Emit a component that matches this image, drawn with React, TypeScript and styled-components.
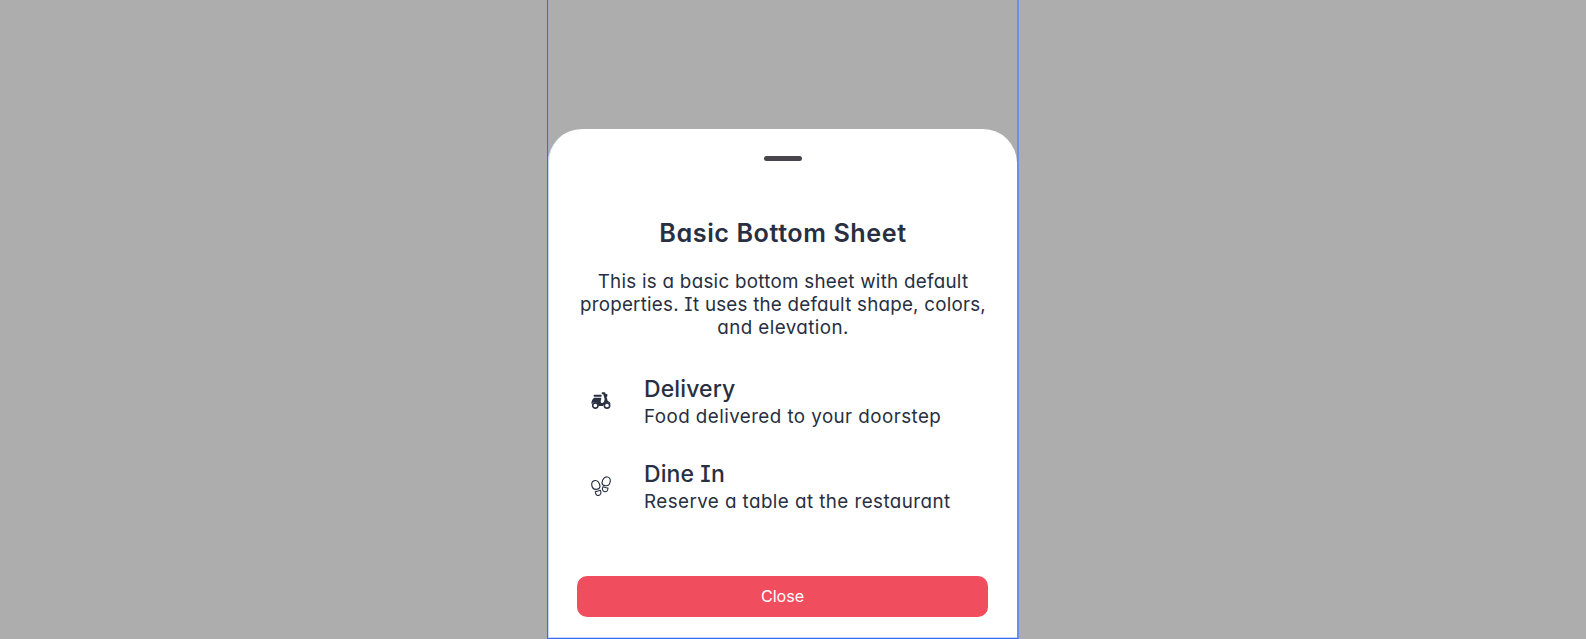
import React from "react";
import styled, { createGlobalStyle } from "styled-components";

const GlobalStyle = createGlobalStyle`
  * { box-sizing: border-box; }
  body {
    margin: 0;
    background: #adadad;
    font-family: Inter, "Open Sans", sans-serif;
    font-feature-settings: "cv11", "cv08";
    color: #282f41;
  }
`;

const Screen = styled.main`
  display: flex;
  justify-content: center;
  height: 639px;
  overflow: hidden;
  background: #adadad;
`;

const Device = styled.div`
  display: flex;
  align-items: flex-end;
  width: 472px;
  height: 639px;
  margin-right: 20px;
  border: solid #2f6ff0;
  border-width: 0 2px 1px 1px;
  border-right-color: #6791e1;
  box-shadow: inset 1px 0 0 #9fa9be;
`;

const Sheet = styled.section`
  display: flex;
  flex-direction: column;
  align-items: center;
  width: 100%;
  height: 509px;
  padding: 27px 28px 0;
  background: #fff;
  border-radius: 34px 34px 0 0;
  box-shadow: inset 1px -1px 0 #c6d7f9;
`;

const Handle = styled.div`
  flex: none;
  width: 38px;
  height: 5px;
  border-radius: 3px;
  background: #49454f;
`;

const Title = styled.h1`
  margin: 56px 0 0;
  padding-left: 1px;
  font-size: 25.2px;
  font-weight: 620;
  line-height: 32px;
  letter-spacing: 0.56px;
  white-space: nowrap;
`;

const Description = styled.p`
  display: flex;
  flex-direction: column;
  align-items: center;
  margin: 20.6px 0 0;
  padding-left: 1px;
  font-size: 18.8px;
  line-height: 23.2px;
  white-space: nowrap;
`;

const Line = styled.span<{ $spacing: number }>`
  letter-spacing: ${(p) => p.$spacing}px;
`;

const Options = styled.ul`
  display: flex;
  flex-direction: column;
  gap: 31px;
  align-self: stretch;
  margin: 35.2px 0 0;
  padding: 0;
  list-style: none;
`;

const Option = styled.li`
  display: grid;
  grid-template-columns: 68px 1fr;
  align-items: center;
  height: 54px;
`;

const Icon = styled.svg`
  width: 20px;
  height: 20px;
  margin: 0 0 0 15px;
  overflow: visible;
  fill: none;
  stroke: #282f41;
  stroke-linecap: round;
  stroke-linejoin: round;
`;

const OptionTitle = styled.h2<{ $spacing: number }>`
  margin: 0 0 1.6px;
  font-size: 23px;
  font-weight: 540;
  line-height: 29px;
  letter-spacing: ${(p) => p.$spacing}px;
`;

const OptionText = styled.p`
  margin: 0;
  font-size: 18.8px;
  line-height: 23px;
  letter-spacing: 0.44px;
  white-space: nowrap;
`;

const CloseButton = styled.button`
  flex: none;
  align-self: stretch;
  height: 41px;
  margin: 62.4px 1px 0;
  padding: 0;
  border: 0;
  border-radius: 10px;
  background: #f04e5e;
  color: #fff;
  font: 400 16.2px/41px Inter, "Open Sans", sans-serif;
  letter-spacing: -0.1px;
`;

const Scooter = () => (
  <Icon viewBox="0 0 60 60">
    <g fill="#282f41" stroke="none">
      <rect x="8" y="11" width="24" height="6" rx="2" />
      <path d="M10 20H31L29 32Q29 37 34 36Q41 34 41 25L37 10H33Q31 7 33 4H39Q43 4 44 8L50 29Q57 32 59 39L51 34Q40 35 36 45H23Q21 33 12 33Q6 33 1 39Q1 25 10 20Z" />
      <path d="M43 9H49V17H45Z" />
    </g>
    <circle cx="13" cy="43.5" r="8" fill="#fff" strokeWidth="4.8" />
    <circle cx="48" cy="43.5" r="8" fill="#fff" strokeWidth="4.8" />
  </Icon>
);

const Footprints = () => (
  <Icon viewBox="0 0 60 60" strokeWidth="3.4">
    <path d="M11 14C19 11 26 21 27 31C27 37 24 39 17 40C8 41 3 35 2 26C2 19 5 15 11 14Z" />
    <path d="M49 3C41 1 34 10 33 20C33 26 36 28 43 29C52 30 57 24 58 15C58 8 55 4 49 3Z" />
    <path d="M13 47C18 47 23 45 28 43C32 50 29 57 23 58C16 60 14 54 13 47Z" />
    <path d="M51 36C46 36 41 34 36 32C32 39 35 46 41 47C48 49 50 43 51 36Z" />
  </Icon>
);

const options = [
  { title: "Delivery", spacing: 0.12, text: "Food delivered to your doorstep", icon: <Scooter /> },
  { title: "Dine In", spacing: 0.1, text: "Reserve a table at the restaurant", icon: <Footprints /> },
];

export default function App() {
  return (
    <>
      <GlobalStyle />
      <Screen>
        <Device>
          <Sheet>
            <Handle />
            <Title>Basic Bottom Sheet</Title>
            <Description>
              <Line $spacing={0.27}>This is a basic bottom sheet with default</Line>
              <Line $spacing={0.22}>properties. It uses the default shape, colors,</Line>
              <Line $spacing={0.42}>and elevation.</Line>
            </Description>
            <Options>
              {options.map((o) => (
                <Option key={o.title}>
                  {o.icon}
                  <div>
                    <OptionTitle $spacing={o.spacing}>{o.title}</OptionTitle>
                    <OptionText>{o.text}</OptionText>
                  </div>
                </Option>
              ))}
            </Options>
            <CloseButton>Close</CloseButton>
          </Sheet>
        </Device>
      </Screen>
    </>
  );
}
